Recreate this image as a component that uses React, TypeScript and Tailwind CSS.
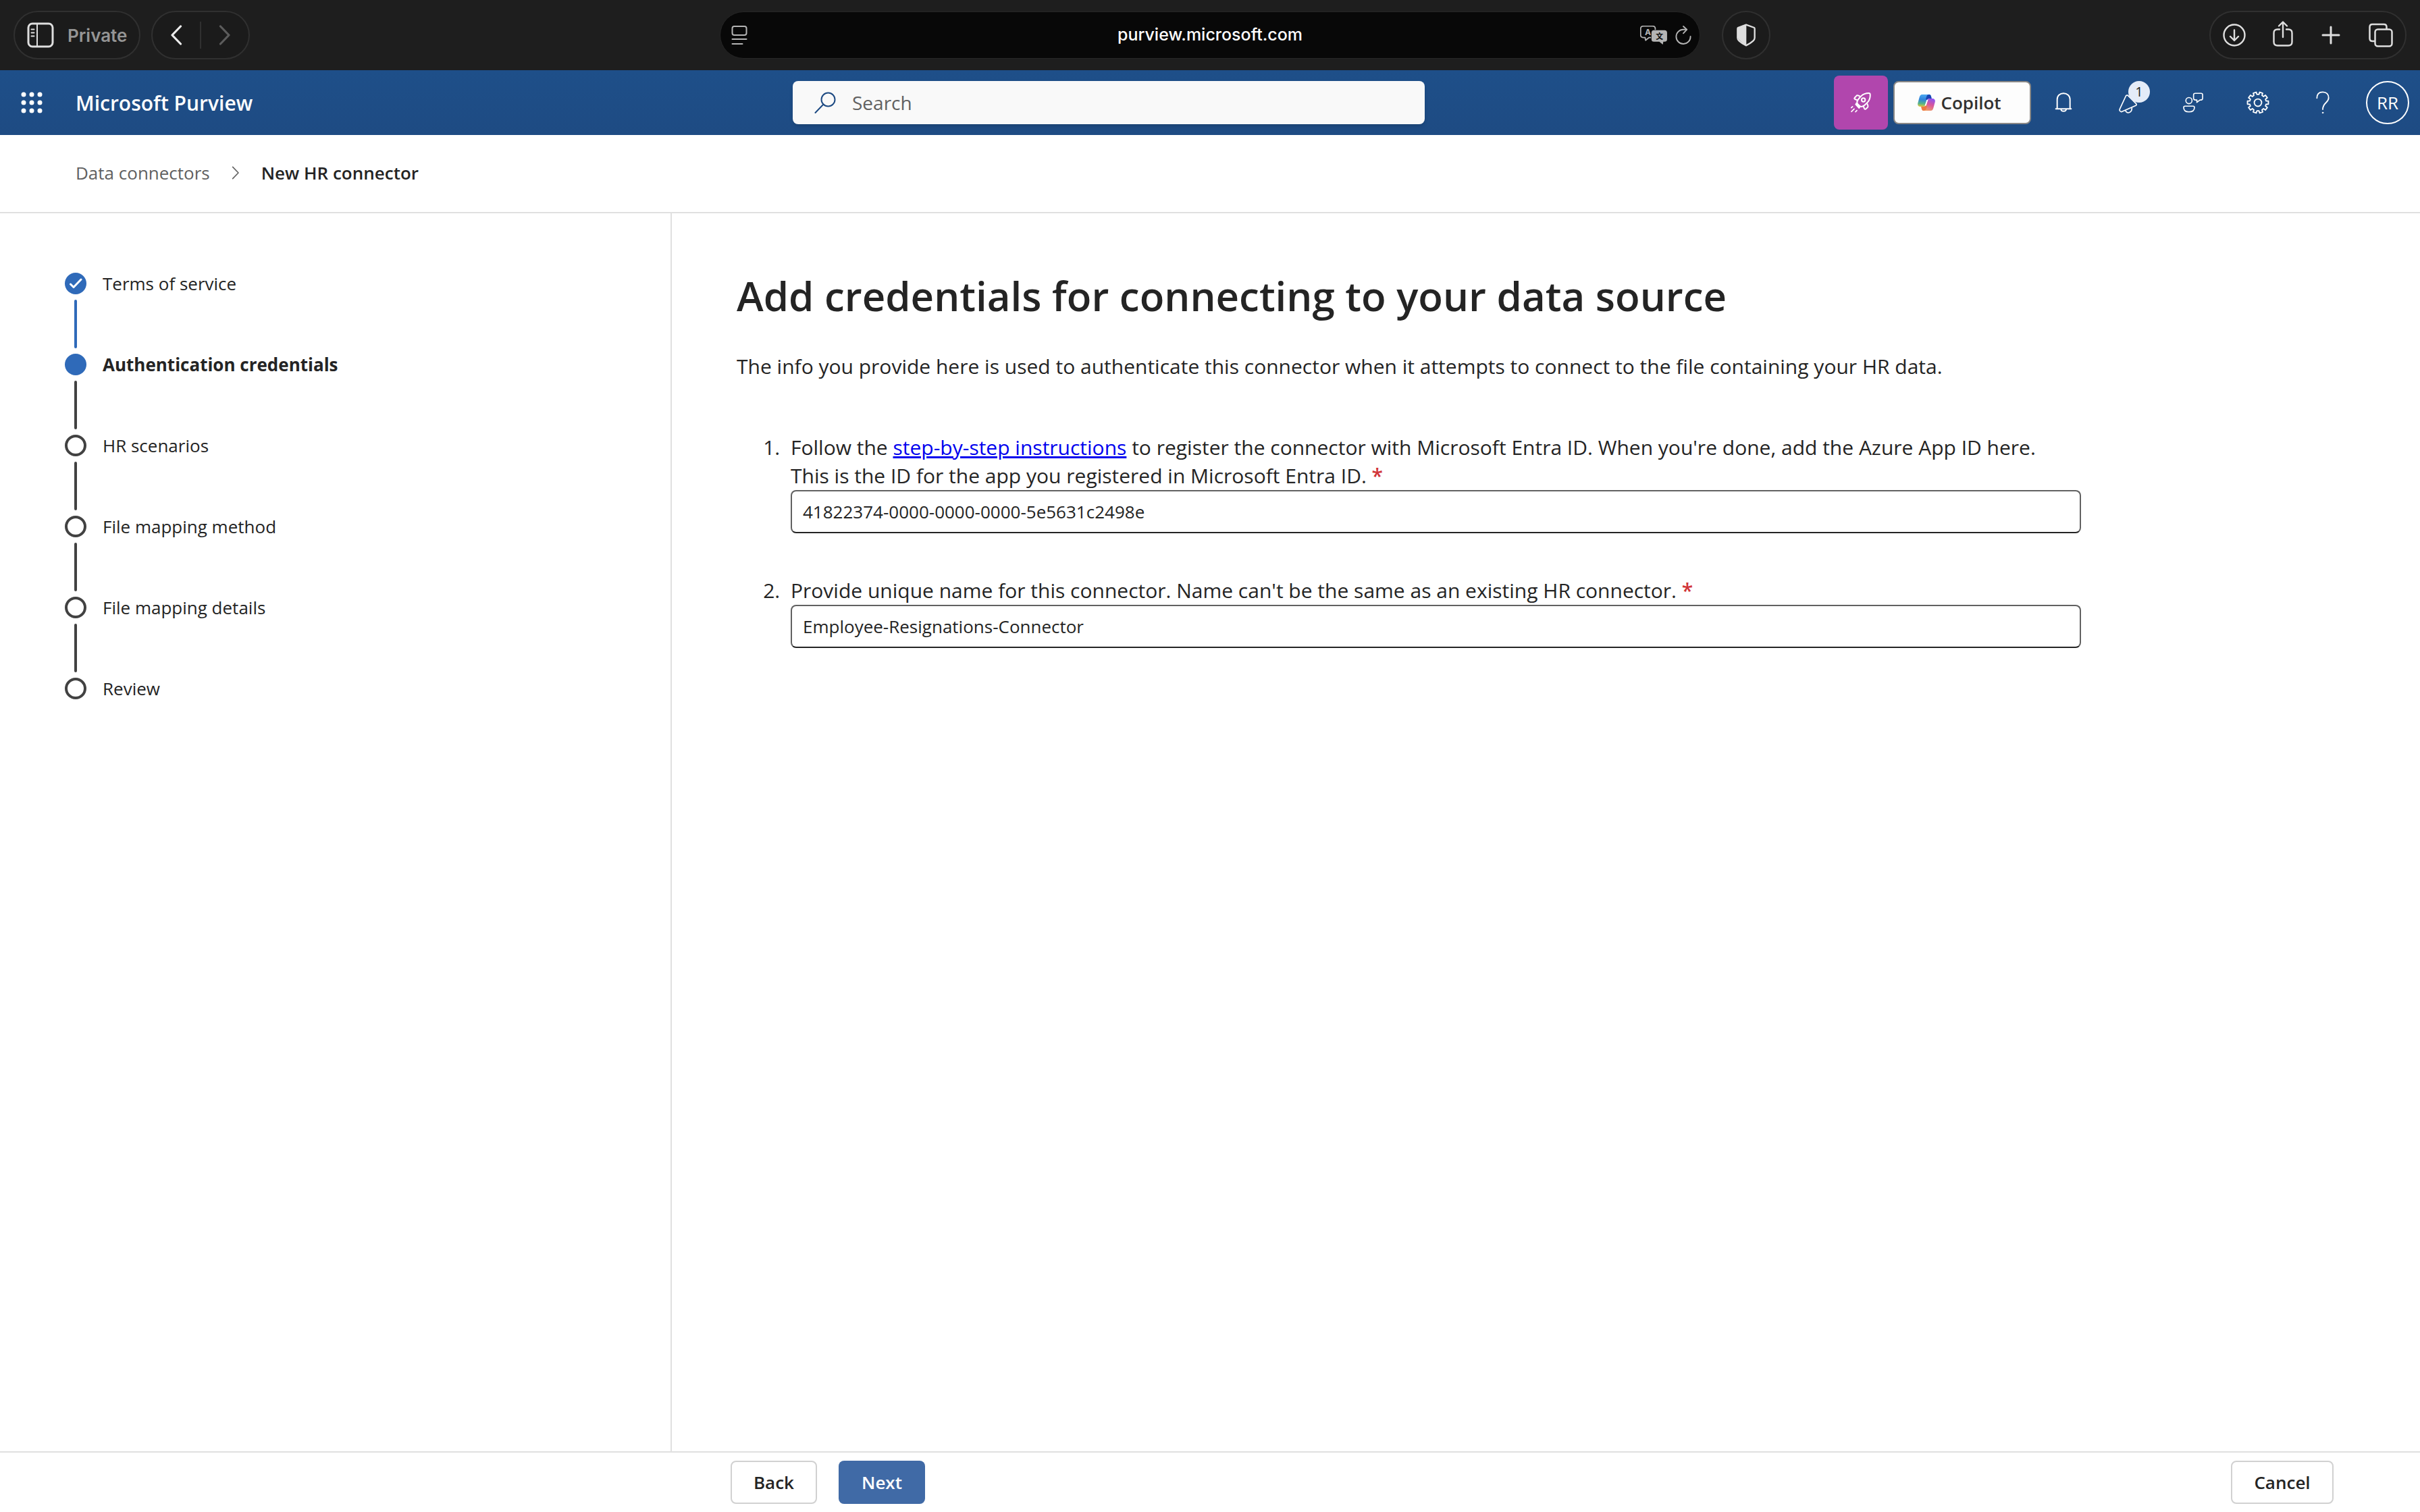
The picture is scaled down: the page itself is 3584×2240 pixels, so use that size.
import type { ReactNode } from "react";

type IconProps = { className?: string };

function SidebarIcon({ className }: IconProps) {
  return (
    <svg viewBox="0 0 39 38" className={className} fill="none" stroke="currentColor" strokeWidth="3" strokeLinecap="round">
      <rect x="1.500" y="2" width="36" height="34" rx="6" />
      <path d="M14.500 2V36" strokeWidth="2" />
      <path d="M6 10.500h4M6 15.500h4M6 20.500h4" strokeWidth="2" />
    </svg>
  );
}

function ChevronLeft({ className }: IconProps) {
  return (
    <svg viewBox="0 0 18 30" className={className} fill="none" stroke="currentColor" strokeWidth="3.200" strokeLinecap="round" strokeLinejoin="round">
      <path d="M15.500 2 3 15l12.500 13" />
    </svg>
  );
}

function ChevronRight({ className, strokeWidth = 3.2 }: IconProps & { strokeWidth?: number }) {
  return (
    <svg viewBox="0 0 18 30" className={className} fill="none" stroke="currentColor" strokeWidth={strokeWidth} strokeLinecap="round" strokeLinejoin="round">
      <path d="M2.500 2 15 15 2.500 28" />
    </svg>
  );
}

function ReaderIcon({ className }: IconProps) {
  return (
    <svg viewBox="0 0 24 30" className={className} fill="none" stroke="currentColor" strokeWidth="2" strokeLinecap="round">
      <rect x="1.500" y="2" width="21" height="13" rx="3" />
      <path d="M1.500 21h21M1.500 28h15" />
    </svg>
  );
}

function TranslateIcon({ className }: IconProps) {
  return (
    <svg viewBox="0 0 114 80" className={className} fill="none">
      <path
        d="M46 50 H38 L23 62 L21 50 H14 Q2 50 2 40 V13 Q2 2 14 2 H52 Q64 2 64 13 V18"
        stroke="currentColor"
        strokeWidth="5"
        strokeLinejoin="round"
      />
      <path d="M58 19H103Q114 19 114 30V58Q114 68 103 68H98L96 80L81 68H58Q48 68 48 58V30Q48 19 58 19Z" fill="currentColor" />
      <text x="20" y="39" fontSize="35" fontWeight="700" fontFamily="Inter, sans-serif" fill="currentColor">
        A
      </text>
      <text x="66" y="56" fontSize="31" fontWeight="700" fontFamily="'Noto Sans CJK SC', sans-serif" fill="#080808">
        文
      </text>
    </svg>
  );
}

function ReloadIcon({ className }: IconProps) {
  return (
    <svg viewBox="0 0 68 82" className={className} fill="none" stroke="currentColor" strokeWidth="5.500" strokeLinecap="round" strokeLinejoin="round">
      <path d="M65 47A31 31 0 1 1 34 17H48" />
      <path d="M34 3 49 17 34 33" />
    </svg>
  );
}

function ShieldIcon({ className }: IconProps) {
  return (
    <svg viewBox="0 0 84 100" className={className}>
      <path d="M42 4 78 17 Q80 18 80 22 V62 Q80 70 73 76 Q60 88 42 96 Q24 88 11 76 Q4 70 4 62 V22 Q4 18 6 17 Z" fill="none" stroke="currentColor" strokeWidth="7" strokeLinejoin="round" />
      <path d="M43 4 6 17V62Q6 72 43 96Z" fill="currentColor" />
    </svg>
  );
}

function DownloadIcon({ className }: IconProps) {
  return (
    <svg viewBox="0 0 34 34" className={className} fill="none" stroke="currentColor" strokeWidth="2.400" strokeLinecap="round" strokeLinejoin="round">
      <circle cx="17" cy="17" r="15.500" />
      <path d="M17 9.500V25M11 19l6 6 6-6" />
    </svg>
  );
}

function ShareIcon({ className }: IconProps) {
  return (
    <svg viewBox="0 0 30 38" className={className} fill="none" stroke="currentColor" strokeWidth="2.400" strokeLinecap="round" strokeLinejoin="round">
      <path d="M10 12.500H7Q1.500 12.500 1.500 18V31Q1.500 36.500 7 36.500H23Q28.500 36.500 28.500 31V18Q28.500 12.500 23 12.500H20" />
      <path d="M15 24V2M9 7.500 15 1.500l6 6" />
    </svg>
  );
}

function PlusIcon({ className }: IconProps) {
  return (
    <svg viewBox="0 0 32 32" className={className} fill="none" stroke="currentColor" strokeWidth="3" strokeLinecap="round">
      <path d="M16 4V28M4 16H28" />
    </svg>
  );
}

function TabsIcon({ className }: IconProps) {
  return (
    <svg viewBox="0 0 36 36" className={className} fill="none" stroke="currentColor" strokeWidth="2.500" strokeLinejoin="round">
      <rect x="9.500" y="9.500" width="25" height="25" rx="4" />
      <path d="M9 27H5.500Q1.500 27 1.500 23V6Q1.500 2 5.500 2H22.500Q26.500 2 26.500 6V9" />
    </svg>
  );
}

function SearchIcon({ className }: IconProps) {
  return (
    <svg viewBox="0 0 32 32" className={className} fill="none" stroke="currentColor" strokeWidth="2" strokeLinecap="round">
      <circle cx="20.500" cy="11.500" r="10" />
      <path d="M13.500 18.500 1.500 31" />
    </svg>
  );
}

function RocketIcon({ className }: IconProps) {
  return (
    <svg viewBox="0 0 90 90" className={className} fill="none" stroke="currentColor" strokeWidth="6" strokeLinecap="round" strokeLinejoin="round">
      <path d="M31 52C24 44 29 35 36 27L46 16C56 6 68 3 80 3Q86 3 86 9C87 22 83 34 75 43L64 54C56 62 47 66 40 60Z" />
      <circle cx="56" cy="33" r="8" />
      <path d="M42 18 34 14Q28 11 24 16L17 24Q14 28 19 30L29 34" />
      <path d="M72 48 76 58Q78 63 74 67L67 73Q63 76 60 71L56 61" />
      <path d="M24 49 39 66" />
      <path d="M22 53 37 69" />
      <path d="M2 68 8 63M3 85 15 73M21 86 27 80" strokeWidth="5" />
    </svg>
  );
}

function CopilotIcon({ className }: IconProps) {
  return (
    <svg viewBox="0 0 78 72" className={className}>
      <defs>
        <linearGradient id="cpLeft" x1="0.300" y1="0" x2="0.200" y2="1">
          <stop offset="0" stopColor="#4aa8f0" />
          <stop offset="0.400" stopColor="#2f83dc" />
          <stop offset="0.750" stopColor="#58b586" />
          <stop offset="1" stopColor="#e3c83e" />
        </linearGradient>
        <linearGradient id="cpRight" x1="0.700" y1="0" x2="0.300" y2="1">
          <stop offset="0" stopColor="#8f55f0" />
          <stop offset="0.450" stopColor="#d8559c" />
          <stop offset="1" stopColor="#f2a462" />
        </linearGradient>
      </defs>
      <path d="M20 0H52C58 0 60 6 62 18H52C46 18 44 22 42 28L36 46C33 52 30 54 24 54H12C2 54-1 46 1 38L8 12C11 3 14 0 20 0Z" fill="url(#cpLeft)" />
      <path d="M52 0C58 0 60 6 62 18H52C46 18 44 21 42 26L36 20 40 8C42 2 45 0 52 0Z" fill="#1b44b4" />
      <path d="M58 72H26C20 72 18 66 16 54H26C32 54 34 50 36 44L42 26C45 20 48 18 54 18H66C76 18 79 26 77 34L70 60C67 69 64 72 58 72Z" fill="url(#cpRight)" />
      <path d="M26 72C20 72 18 66 16 54H26C32 54 34 51 36 46L42 52 38 64C36 70 33 72 26 72Z" fill="#ee7a42" />
      <path d="M47 22 40 24 31 52 38 49Z" fill="#ffffff" />
    </svg>
  );
}

function BellIcon({ className }: IconProps) {
  return (
    <svg viewBox="0 0 76 90" className={className} fill="none" stroke="currentColor" strokeWidth="6" strokeLinecap="round" strokeLinejoin="round">
      <path d="M4 73H72M10 72V31C10 14 22 4 38 4S67 14 67 31V72" />
      <path d="M27 75C28 86 49 86 50 75" />
    </svg>
  );
}

function MegaphoneIcon({ className }: IconProps) {
  return (
    <svg viewBox="0 0 84 96" className={className} fill="none" stroke="currentColor" strokeWidth="5" strokeLinecap="round" strokeLinejoin="round">
      <path d="M30 21 4 77Q1 86 11 89L76 61Q81 57 76 52L40 16Q33 13 30 21Z" />
      <path d="M30 84C34 98 58 96 58 72" />
    </svg>
  );
}

function PersonFeedbackIcon({ className }: IconProps) {
  return (
    <svg viewBox="0 0 92 90" className={className} fill="none" stroke="currentColor" strokeWidth="5" strokeLinejoin="round">
      <circle cx="27" cy="36" r="14" />
      <path d="M9 61H46Q52 61 52 67C52 80 42 87 27 87S3 80 3 67Q3 61 9 61Z" />
      <path d="M56 3H82Q89 3 89 10V26Q89 33 82 33H77L63 44V33H56Q48 33 48 26V10Q48 3 56 3Z" />
    </svg>
  );
}

const GEAR_TEETH = 10;
const gearPath = (() => {
  const point = (radius: number, angle: number) =>
    `${(50 + radius * Math.sin(angle)).toFixed(1)} ${(50 - radius * Math.cos(angle)).toFixed(1)}`;
  const step = (2 * Math.PI) / GEAR_TEETH;
  const parts: string[] = [];
  for (let i = 0; i < GEAR_TEETH; i += 1) {
    const middle = (i + 0.5) * step;
    parts.push(
      point(36, middle - step * 0.32),
      point(46, middle - step * 0.24),
      point(46, middle + step * 0.24),
      point(36, middle + step * 0.32),
    );
  }
  return `M${parts.join("L")}Z`;
})();

function GearIcon({ className }: IconProps) {
  return (
    <svg viewBox="0 0 100 100" className={className} fill="none" stroke="currentColor" strokeWidth="5.500" strokeLinejoin="round">
      <path d={gearPath} />
      <circle cx="50" cy="50" r="16" />
    </svg>
  );
}

function HelpIcon({ className }: IconProps) {
  return (
    <svg viewBox="0 0 60 100" className={className} fill="none" stroke="currentColor" strokeWidth="5.500" strokeLinecap="round">
      <path d="M4 30C4 12 14 3 30 3S56 13 56 29C56 51 30 50 30 80" />
      <circle cx="30" cy="95" r="2.500" fill="currentColor" strokeWidth="3" />
    </svg>
  );
}

function WaffleIcon({ className }: IconProps) {
  return (
    <svg viewBox="0 0 32 32" className={className} fill="currentColor">
      {[4, 16, 28].map((y) => [4, 16, 28].map((x) => <circle key={`${x}-${y}`} cx={x} cy={y} r="3.500" />))}
    </svg>
  );
}

function BrowserBar() {
  return (
    <div className="grid h-[104px] grid-cols-[1fr_1452px_1fr] items-center bg-[#1e1e1e] px-5 font-[Inter,sans-serif] text-[#dedede]">
      <div className="flex gap-4">
        <button type="button" className="flex h-[72px] items-center gap-5 rounded-full border-2 border-[#303030] bg-[#1b1b1b] px-[18px]">
          <SidebarIcon className="h-[38px] w-10" />
          <span className="text-[26px] font-semibold text-[#959595]">Private</span>
        </button>
        <div className="flex h-[72px] w-[146px] items-center justify-between rounded-full border-2 border-[#303030] bg-[#1b1b1b] px-[26px]">
          <button type="button" aria-label="Go back">
            <ChevronLeft className="h-[30px] w-[18px] text-[#ececec]" />
          </button>
          <span className="h-10 w-0.5 bg-[#303030]" />
          <button type="button" aria-label="Go forward">
            <ChevronRight className="h-[30px] w-[18px] text-[#5c5c5c]" />
          </button>
        </div>
      </div>

      <div className="grid h-[70px] grid-cols-[1fr_auto_1fr] items-center rounded-full border border-[#262626] bg-[#080808] px-3 text-[#b4b4b4]">
        <button type="button" aria-label="Page menu" className="justify-self-start pl-1">
          <ReaderIcon className="h-[30px] w-6" />
        </button>
        <span className="text-[25px] font-medium text-white">purview.microsoft.com</span>
        <div className="flex items-center gap-3 justify-self-end">
          <button type="button" aria-label="Translate">
            <TranslateIcon className="h-7 w-10" />
          </button>
          <button type="button" aria-label="Reload">
            <ReloadIcon className="h-7 w-6" />
          </button>
        </div>
      </div>

      <div className="flex items-center justify-between pl-8">
        <button type="button" aria-label="Privacy report" className="flex size-[72px] items-center justify-center rounded-full border-2 border-[#303030] bg-[#1b1b1b]">
          <ShieldIcon className="h-[34px] w-7" />
        </button>
        <div className="flex h-[72px] w-[292px] items-center justify-between rounded-full border-2 border-[#303030] bg-[#1b1b1b] px-[18px]">
          <button type="button" aria-label="Downloads">
            <DownloadIcon className="size-[34px]" />
          </button>
          <button type="button" aria-label="Share">
            <ShareIcon className="mb-1 h-[38px] w-[30px]" />
          </button>
          <button type="button" aria-label="New tab">
            <PlusIcon className="size-8" />
          </button>
          <button type="button" aria-label="Show tabs">
            <TabsIcon className="size-9" />
          </button>
        </div>
      </div>
    </div>
  );
}

function HeaderButton({ label, children }: { label: string; children: ReactNode }) {
  return (
    <button type="button" aria-label={label} className="flex h-24 w-24 items-center justify-center">
      {children}
    </button>
  );
}

function AppHeader() {
  return (
    <header className="grid h-24 grid-cols-[1174px_936px_1fr] items-center bg-linear-to-b from-[#1e4f89] to-[#1e4b83] text-white">
      <div className="flex items-center">
        <button type="button" aria-label="App launcher" className="flex size-24 items-center justify-center">
          <WaffleIcon className="mr-0.5 size-8" />
        </button>
        <a href="#home" className="pl-4 text-[30px] font-semibold">
          Microsoft Purview
        </a>
      </div>

      <label className="flex h-16 items-center gap-6 rounded-lg bg-[#f9f9f9] px-8 text-[#1e4b83] shadow-md">
        <SearchIcon className="size-8" />
        <input
          type="search"
          placeholder="Search"
          aria-label="Search"
          className="min-w-0 flex-1 bg-transparent text-[28px] text-[#242424] outline-none placeholder:text-[#616161]"
        />
      </label>

      <div className="flex items-center justify-end">
        <button type="button" aria-label="What's new" className="mr-2 flex size-20 items-center justify-center rounded-lg bg-[#b146ad]">
          <RocketIcon className="size-[30px]" />
        </button>
        <button type="button" className="flex h-16 w-[204px] items-center justify-center gap-2 rounded-lg border-2 border-[#8a8886] bg-[#fdfdfd] pr-2 text-[26px] font-semibold text-[#323130]">
          <CopilotIcon className="h-6 w-[26px]" />
          Copilot
        </button>
        <HeaderButton label="Notifications">
          <BellIcon className="h-[30px] w-[26px]" />
        </HeaderButton>
        <HeaderButton label="Announcements">
          <span className="relative">
            <MegaphoneIcon className="h-8 w-7" />
            <span className="absolute -top-4 left-3.5 flex size-8 items-center justify-center rounded-full bg-[#e4ecf8] text-xl text-[#242424]">1</span>
          </span>
        </HeaderButton>
        <HeaderButton label="Feedback">
          <PersonFeedbackIcon className="size-[30px]" />
        </HeaderButton>
        <HeaderButton label="Settings">
          <GearIcon className="size-[34px]" />
        </HeaderButton>
        <HeaderButton label="Help">
          <HelpIcon className="h-[34px] w-5" />
        </HeaderButton>
        <HeaderButton label="Account">
          <span className="flex size-16 items-center justify-center rounded-full border-2 border-white text-[26px]">RR</span>
        </HeaderButton>
      </div>
    </header>
  );
}

function Breadcrumb() {
  return (
    <nav aria-label="Breadcrumb" className="flex h-[116px] items-center gap-8 border-b-2 border-[#e0e0e0] px-28 pb-0.5 text-[26px]">
      <a href="#data-connectors" className="text-[#616161]">
        Data connectors
      </a>
      <ChevronRight className="h-5 w-3 text-[#616161]" strokeWidth={2.4} />
      <span aria-current="page" className="font-semibold">
        New HR connector
      </span>
    </nav>
  );
}

type StepState = "done" | "current" | "todo";

const steps: { label: string; state: StepState }[] = [
  { label: "Terms of service", state: "done" },
  { label: "Authentication credentials", state: "current" },
  { label: "HR scenarios", state: "todo" },
  { label: "File mapping method", state: "todo" },
  { label: "File mapping details", state: "todo" },
  { label: "Review", state: "todo" },
];

function StepMarker({ state }: { state: StepState }) {
  if (state === "todo") {
    return <span className="size-8 rounded-full border-4 border-[#424242]" />;
  }
  return (
    <span className="flex size-8 items-center justify-center rounded-full bg-[#2f6ab9]">
      {state === "done" && (
        <svg viewBox="0 0 20 16" className="h-4 w-5" fill="none" stroke="white" strokeWidth="3" strokeLinecap="round" strokeLinejoin="round">
          <path d="M2.500 9 7 13.500 18 2" />
        </svg>
      )}
    </span>
  );
}

function Steps() {
  return (
    <ol className="w-[995px] shrink-0 border-r-2 border-[#e0e0e0] px-24 pt-22 text-[26px] leading-8">
      {steps.map((step, index) => (
        <li key={step.label} className="flex gap-6">
          <div className="flex flex-col items-center gap-2 pb-2">
            <StepMarker state={step.state} />
            {index < steps.length - 1 && (
              <span className={step.state === "done" ? "h-18 w-1 rounded-full bg-[#2f6ab9]" : "h-18 w-1 rounded-full bg-[#424242]"} />
            )}
          </div>
          <span className={step.state === "current" ? "font-bold" : ""}>{step.label}</span>
        </li>
      ))}
    </ol>
  );
}

const inputClass =
  "block h-16 w-full rounded-lg border-2 border-[#616161] border-b-[#242424] bg-white px-4 text-[26px] text-[#242424] outline-none";

function CredentialsForm() {
  return (
    <main className="flex-1 pt-[78px] pr-1 pl-24">
      <h1 className="text-[60px] leading-[88px] font-semibold">Add credentials for connecting to your data source</h1>
      <p className="mt-10 text-[30px] leading-[42px]">
        The info you provide here is used to authenticate this connector when it attempts to connect to the file containing your HR data.
      </p>
      <ol className="mt-[78px] flex w-4/5 list-decimal flex-col gap-16 pl-18 text-[30px] leading-[42px]">
        <li className="pl-2">
          <label htmlFor="app-id" className="block">
            Follow the{" "}
            <a href="#instructions" className="text-[#0000ee] underline">
              step-by-step instructions
            </a>{" "}
            to register the connector with Microsoft Entra ID. When you're done, add the Azure App ID here.
            <br />
            This is the ID for the app you registered in Microsoft Entra ID. <span className="font-semibold text-[#d13438]">*</span>
          </label>
          <input id="app-id" type="text" defaultValue="41822374-0000-0000-0000-5e5631c2498e" className={inputClass} />
        </li>
        <li className="pl-2">
          <label htmlFor="connector-name" className="block">
            Provide unique name for this connector. Name can't be the same as an existing HR connector.{" "}
            <span className="font-semibold text-[#d13438]">*</span>
          </label>
          <input id="connector-name" type="text" defaultValue="Employee-Resignations-Connector" className={inputClass} />
        </li>
      </ol>
    </main>
  );
}

function Footer() {
  return (
    <footer className="flex h-[90px] items-center gap-8 border-t-2 border-[#e0e0e0] pr-32 pl-[1082px] text-[26px] font-semibold">
      <button type="button" className="h-16 w-32 rounded-lg border-2 border-[#d1d1d1] bg-white">
        Back
      </button>
      <button type="button" className="h-16 w-32 rounded-lg bg-[#406aa6] text-white">
        Next
      </button>
      <button type="button" className="ml-auto h-16 w-[152px] rounded-lg border-2 border-[#d1d1d1] bg-white">
        Cancel
      </button>
    </footer>
  );
}

export default function App() {
  return (
    <div className="flex min-h-screen flex-col bg-white font-['Open_Sans',sans-serif] text-[#242424]">
      <BrowserBar />
      <AppHeader />
      <Breadcrumb />
      <div className="flex flex-1">
        <Steps />
        <CredentialsForm />
      </div>
      <Footer />
    </div>
  );
}
